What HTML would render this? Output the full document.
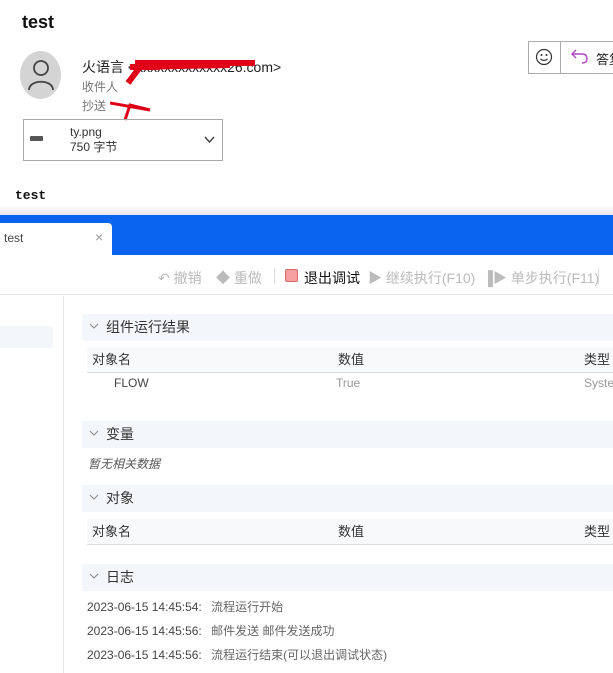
<!DOCTYPE html>
<html><head><meta charset="utf-8">
<style>
*{margin:0;padding:0;box-sizing:border-box}
body{width:613px;height:673px;overflow:hidden;background:#fff;position:relative;font-family:"Liberation Sans","Noto Sans CJK SC",sans-serif;}
.a{position:absolute;white-space:nowrap}
.sec{position:absolute;left:82px;width:531px;height:27px;background:#f3f6fa;font-size:14px;color:#333;line-height:27px;padding-left:24px}
.sec svg{position:absolute;left:7px;top:9px}
.th{position:absolute;left:87px;width:526px;height:26px;background:#f7f9fa;border-bottom:1px solid #ddd;font-size:13px;color:#333;line-height:26px}
.log{position:absolute;left:87px;font-size:12px;color:#444;white-space:nowrap}
.log span{color:#666;margin-left:6px}
</style></head><body>
<div class="a" style="left:22px;top:12px;font-size:18px;font-weight:bold;color:#111">test</div>
<div class="a" style="left:20px;top:51px;width:41px;height:48px;border-radius:50%;background:#d4d4d4"></div>
<svg class="a" style="left:28px;top:57px" width="26" height="34" viewBox="0 0 26 34"><circle cx="13" cy="11" r="7" fill="none" stroke="#444" stroke-width="1.8"/><path d="M1 33 C1 22 25 22 25 33" fill="none" stroke="#444" stroke-width="1.8"/></svg>
<div class="a" style="left:82px;top:57px;font-size:14px;color:#222">火语言 &lt;xxxxxxxxxxxxx26.com&gt;</div>
<svg class="a" style="left:110px;top:55px" width="160" height="70"><path d="M25 8 L145 8 M20 12 L120 10 M18 28 L30 12 L50 12" stroke="#e00018" stroke-width="6" fill="none"/><path d="M0 48 L40 55 L20 50 L15 65" stroke="#e00018" stroke-width="3" fill="none"/></svg>
<div class="a" style="left:82px;top:78px;font-size:12px;color:#777">收件人</div>
<div class="a" style="left:82px;top:97px;font-size:12px;color:#777">抄送</div>
<div class="a" style="left:23px;top:119px;width:200px;height:42px;border:1px solid #aaa"></div>
<div class="a" style="left:30px;top:136px;width:13px;height:5px;background:#555;border-radius:1px"></div>
<div class="a" style="left:70px;top:125px;font-size:12px;color:#333;line-height:15px">ty.png<br>750 字节</div>
<svg class="a" style="left:204px;top:136px" width="11" height="8"><path d="M1 1 L5.5 6 L10 1" stroke="#444" fill="none" stroke-width="1.5"/></svg>
<div class="a" style="left:528px;top:41px;width:90px;height:33px;border:1px solid #aaa"></div>
<div class="a" style="left:560px;top:41px;width:1px;height:33px;background:#aaa"></div>
<svg class="a" style="left:535px;top:48px" width="18" height="18"><circle cx="9" cy="9" r="7.5" fill="none" stroke="#333" stroke-width="1.2"/><circle cx="6.5" cy="7" r="1" fill="#333"/><circle cx="11.5" cy="7" r="1" fill="#333"/><path d="M5.5 11 Q9 14 12.5 11" stroke="#333" fill="none" stroke-width="1.2"/></svg>
<svg class="a" style="left:570px;top:48px" width="20" height="18"><path d="M6 2 L2 6 L6 10 M2 6 L12 6 Q17 6 17 11 Q17 15 12 15" stroke="#b04ac0" fill="none" stroke-width="1.4"/></svg>
<div class="a" style="left:596px;top:49px;font-size:13px;color:#222">答复</div>
<div class="a" style="left:15px;top:188px;font-size:13px;font-weight:bold;font-family:'Liberation Mono',monospace;color:#111">test</div>
<div class="a" style="left:0;top:205px;width:613px;height:10px;background:linear-gradient(#fff,#e8e8e8)"></div>
<div class="a" style="left:0;top:215px;width:613px;height:40px;background:#0a64f0"></div>
<div class="a" style="left:0;top:223px;width:112px;height:32px;background:#fff;border-radius:0 4px 0 0"></div>
<div class="a" style="left:4px;top:231px;font-size:12px;color:#444">test</div>
<div class="a" style="left:95px;top:229px;font-size:14px;color:#999">×</div>
<div class="a" style="left:0;top:255px;width:613px;height:40px;border-bottom:1px solid #e5e5e5"></div>
<div class="a" style="left:158px;top:268px;font-size:14px;color:#bbb">↶ 撤销</div>
<div class="a" style="left:216px;top:268px;font-size:14px;color:#bbb">◆ 重做</div>
<div class="a" style="left:274px;top:268px;width:1px;height:16px;background:#ddd"></div>
<div class="a" style="left:285px;top:269px;width:13px;height:13px;background:#f4a0a0;border:1px solid #d66;border-radius:2px"></div>
<div class="a" style="left:304px;top:268px;font-size:14px;color:#111">退出调试</div>
<div class="a" style="left:368px;top:268px;font-size:14px;color:#bbb">▶ 继续执行(F10)</div>
<div class="a" style="left:483px;top:268px;font-size:14px;color:#bbb">▐▶ 单步执行(F11)</div>
<div class="a" style="left:598px;top:268px;width:1px;height:16px;background:#ddd"></div>
<div class="a" style="left:63px;top:296px;width:1px;height:377px;background:#e8e8e8"></div>
<div class="a" style="left:0;top:326px;width:53px;height:22px;background:#f3f6fa"></div>
<div class="sec" style="top:314px"><svg width="10" height="7"><path d="M1 1 L5 5 L9 1" stroke="#888" fill="none"/></svg>组件运行结果</div>
<div class="th" style="top:347px"><span class="a" style="left:5px">对象名</span><span class="a" style="left:251px">数值</span><span class="a" style="left:497px">类型</span></div>
<div class="a" style="left:114px;top:376px;font-size:12px;color:#444">FLOW</div>
<div class="a" style="left:336px;top:376px;font-size:12px;color:#999">True</div>
<div class="a" style="left:584px;top:376px;font-size:12px;color:#999">System</div>
<div class="sec" style="top:421px"><svg width="10" height="7"><path d="M1 1 L5 5 L9 1" stroke="#888" fill="none"/></svg>变量</div>
<div class="a" style="left:88px;top:455px;font-size:12px;color:#555;font-style:italic">暂无相关数据</div>
<div class="sec" style="top:485px"><svg width="10" height="7"><path d="M1 1 L5 5 L9 1" stroke="#888" fill="none"/></svg>对象</div>
<div class="th" style="top:519px"><span class="a" style="left:5px">对象名</span><span class="a" style="left:251px">数值</span><span class="a" style="left:497px">类型</span></div>
<div class="sec" style="top:564px"><svg width="10" height="7"><path d="M1 1 L5 5 L9 1" stroke="#888" fill="none"/></svg>日志</div>
<div class="log" style="top:598px">2023-06-15 14:45:54: <span>流程运行开始</span></div>
<div class="log" style="top:622px">2023-06-15 14:45:56: <span>邮件发送 邮件发送成功</span></div>
<div class="log" style="top:646px">2023-06-15 14:45:56: <span>流程运行结束(可以退出调试状态)</span></div>
</body></html>
